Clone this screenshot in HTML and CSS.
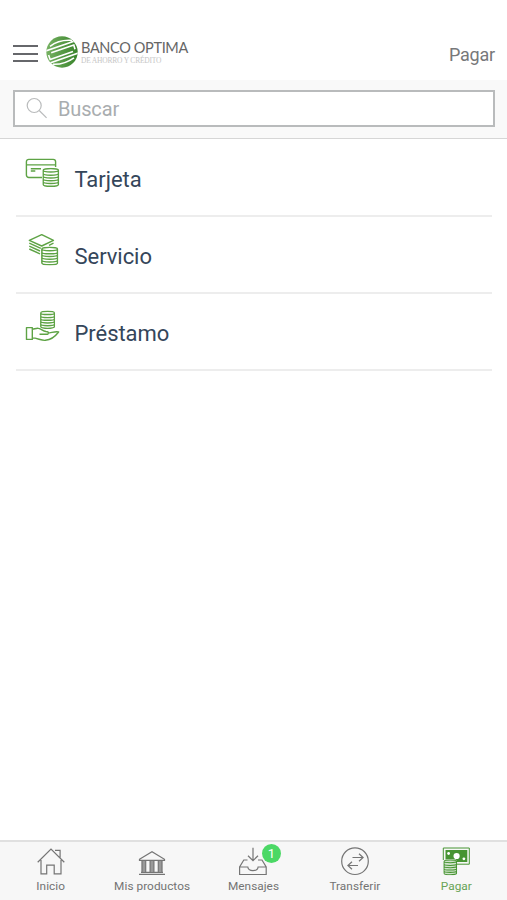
FILE: index.html
```html
<!DOCTYPE html>
<html lang="es">
<head>
<meta charset="utf-8">
<meta name="viewport" content="width=device-width, initial-scale=1">
<title>Banco Optima</title>
<link rel="stylesheet" href="styles.css">
</head>
<body>
<svg class="defs" width="0" height="0" aria-hidden="true">
  <symbol id="coins" viewBox="0 0 16 18" preserveAspectRatio="none">
    <path d="M.8 2.3v13.3c0 1 3.2 1.7 7.2 1.7s7.2-.7 7.2-1.7V2.3C15.2 1.3 12 .7 8 .7S.8 1.3.8 2.3c0 .9 3.2 1.6 7.2 1.6s7.2-.7 7.2-1.6M.8 5.3c0 1 3.2 1.6 7.2 1.6s7.2-.6 7.2-1.6M.8 7.9c0 1 3.2 1.6 7.2 1.6s7.2-.6 7.2-1.6M.8 10.5c0 1 3.2 1.6 7.2 1.6s7.2-.6 7.2-1.6M.8 13.1c0 1 3.2 1.6 7.2 1.6s7.2-.6 7.2-1.6"/>
  </symbol>
</svg>
<div class="app">
  <header class="top">
    <div class="menu"><i></i><i></i><i></i></div>
    <svg class="logo" width="32" height="32" viewBox="0 0 32 32">
      <defs>
        <clipPath id="disc"><circle cx="16" cy="16" r="15.7"/></clipPath>
        <linearGradient id="leaf" x1="0" x2="1" y1="0" y2="0"><stop offset="0" stop-color="#76b162"/><stop offset="1" stop-color="#39842b"/></linearGradient>
      </defs>
      <circle cx="16" cy="16" r="15.7" fill="url(#leaf)"/>
      <g clip-path="url(#disc)" fill="none" stroke="#fff" stroke-width="1.6">
        <path d="M4 10.3Q13 3.4 26 4.4M-1 15.3 28 5.3M5.2 16.8 27.8 9 29 13.3M2.6 19 4.2 23.5 27 15.4M4 27 33 16.7M7 28.2Q18 28.8 28 21.8"/>
      </g>
    </svg>
    <div class="brand"><div class="name">BANCO OPTIMA</div><div class="tag">DE AHORRO Y CRÉDITO</div></div>
    <div class="page">Pagar</div>
  </header>
  <div class="search">
    <div class="field">
      <svg width="22" height="22" viewBox="0 0 22 22" fill="none" stroke="#b9bbbc" stroke-width="1.2"><circle cx="8.2" cy="8.5" r="7"/><path d="m13.2 13.5 7.4 7.4"/></svg>
      <span>Buscar</span>
    </div>
  </div>
  <main class="list">
    <div class="row">
      <svg class="icon" viewBox="0 0 36 36"><path d="M17 21.5H3.8a2.4 2.4 0 0 1-2.4-2.4V5.8a2.4 2.4 0 0 1 2.4-2.4h24.4a2.4 2.4 0 0 1 2.4 2.4V11M1.4 8.9h29.2M5.8 12.7H16M5.8 15h4.5"/><use href="#coins" x="17.3" y="11.8" width="17" height="19.2"/></svg>
      <span>Tarjeta</span>
    </div>
    <div class="row">
      <svg class="icon" viewBox="0 0 36 36"><path d="M16.7 1.6 28.5 7.3 16.7 13 4.3 7.3zM4.3 10.2 15.8 15.4M4.3 13.1 15 18M4.3 16 15 20.9M28.5 10.2l-4.5 2.2"/><use href="#coins" x="16" y="13.6" width="17.4" height="18.8"/></svg>
      <span>Servicio</span>
    </div>
    <div class="row">
      <svg class="icon" viewBox="0 0 36 36"><use href="#coins" x="15" y=".5" width="15.2" height="18.6"/><path d="M1.5 17.6h5.8v11.8H1.5zM7.3 19.2c2.8-.4 4.3-1.2 6.3-.8 3 .5 4 2.8 7.4 3.1 3.2.2 3.4 2.7.5 2.7h-7M22.8 23.1c3.5-.2 7.8-2.1 10.8-1.1-3 4-7.6 7.8-13.2 8.3-4 .4-8.1-2.3-13.1-2.4"/></svg>
      <span>Préstamo</span>
    </div>
  </main>
  <nav class="tabs">
    <div class="tab">
      <svg width="30" height="30" viewBox="0 0 30 30"><path d="M1.7 15.3 15 2.1l13.3 13.2M5 12.9v14h5.7v-8.7h7.5v8.7H25v-14M19 3.3h5.1v7.1"/></svg>
      <span>Inicio</span>
    </div>
    <div class="tab">
      <svg width="30" height="30" viewBox="0 0 30 30"><path d="M2.5 12.3 15 4.7l12.5 7.6v1h-25zM4 25.3h22M2 27.4h26"/><path d="M6.8 14v11M15 14v11M23.2 14v11" stroke="#999" stroke-width="3.8"/><path d="M5 14v11M8.7 14v11M13.1 14v11M16.9 14v11M21.3 14v11M25 14v11"/></svg>
      <span>Mis productos</span>
    </div>
    <div class="tab">
      <svg width="30" height="30" viewBox="0 0 30 30"><path d="M9.5 13H5.8L1.6 20v7.5h26.6V20L24 13h-4M1.6 20h8.2c.5 4.8 9.8 4.8 10.3 0h8.1M15 .8v12.7M10 8.8l5 4.8 5-4.8"/></svg>
      <b class="badge">1</b>
      <span>Mensajes</span>
    </div>
    <div class="tab">
      <svg width="30" height="30" viewBox="0 0 30 30"><circle cx="15" cy="14.2" r="13.3"/><path d="M12.5 10.5H23M19 6.7l4.1 3.8L19 14.3M18 18.5H8M12 14.7l-4.1 3.8 4.1 3.8"/></svg>
      <span>Transferir</span>
    </div>
    <div class="tab active">
      <svg width="30" height="30" viewBox="0 0 30 30"><path d="M2.3 13V1h26v16.2H16" stroke-width="1"/><path d="M4.5 3h21.8v12H16l-1-2.5H4.5z" fill="#479432" stroke="none"/><g fill="#fff" stroke="none"><circle cx="15.6" cy="9" r="3.1"/><circle cx="7.6" cy="6.5" r="1.4"/><circle cx="22.9" cy="11.8" r="1.4"/></g><rect x="2.5" y="12.5" width="13.5" height="15.5" rx="4" fill="#cfe3ca" stroke="none"/><use href="#coins" x="2.3" y="12.3" width="14" height="16"/></svg>
      <span>Pagar</span>
    </div>
  </nav>
</div>
</body>
</html>
```

FILE: styles.css
```css
* { box-sizing: border-box; }
body { margin: 0; background: #fff; font-family: Roboto, "Liberation Sans", sans-serif; }
.defs { display: block; height: 0; }
.app { display: flex; flex-direction: column; height: 900px; }
.top { height: 80px; padding: 36px 12px 0 13px; display: flex; align-items: flex-start; }
.menu { width: 25px; padding-top: 9px; display: grid; gap: 5.5px; }
.menu i { display: block; height: 2px; background: #66676b; }
.logo { margin-left: 8px; flex: none; }
.brand { margin-left: 3px; font-family: Lato, sans-serif; white-space: nowrap; }
.name { font-size: 14.5px; line-height: 18px; padding-top: 3px; color: #666; letter-spacing: -.35px; }
.tag { font-family: "Liberation Serif", serif; font-size: 7.5px; line-height: 8px; color: #c6c6c6; letter-spacing: -.2px; }
.page { margin-left: auto; font-size: 18px; line-height: 24px; padding-top: 7px; color: #77787a; letter-spacing: -.2px; }
.search { height: 59px; padding: 10px 12px 0 13px; background: #f9f9f9; border-bottom: 1px solid #d6d6d6; }
.field { height: 37px; border: 2px solid #b9bbbc; background: #fff; display: flex; align-items: center; padding-left: 11px; color: #a9adaf; font-size: 20px; }
.field svg { margin-top: -1px; }
.field span { margin-left: 10px; line-height: 24px; letter-spacing: -.15px; }
.list { flex: 1; padding: 1px 15px 0 16px; }
.row { height: 77px; border-bottom: 2px solid #ededed; display: flex; align-items: flex-start; padding: 16px 0 0 9px; font-size: 22px; color: #35465a; }
.row span { line-height: 28px; margin: 10px 0 0 13.5px; letter-spacing: -.05px; }
.icon { width: 36px; height: 36px; fill: none; stroke: #5ea345; stroke-width: 1.4; stroke-linejoin: round; }
.tabs { height: 60px; border-top: 2px solid #e0e0e0; background: #f7f7f7; display: grid; grid-template-columns: repeat(5, 1fr); }
.tab { position: relative; display: flex; flex-direction: column; align-items: center; padding-top: 5px; font-size: 11.8px; color: #737373; }
.tab svg { fill: none; stroke: #757575; stroke-width: 1.2; }
.tab span { line-height: 16px; margin-top: 1px; letter-spacing: .05px; }
.tab.active { color: #67a356; }
.tab.active svg { stroke: #479432; }
.badge { position: absolute; left: 59px; top: 2px; width: 19px; height: 19px; border-radius: 50%; background: #4bd865; color: #fff; font-size: 13px; font-weight: 400; line-height: 19px; text-align: center; }
```
